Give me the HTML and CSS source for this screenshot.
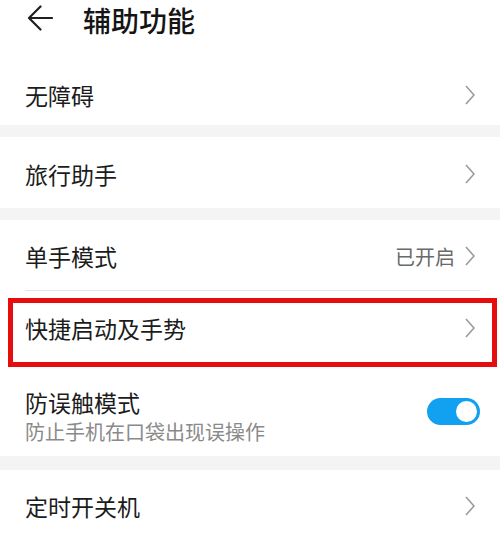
FILE: index.html
```html
<!DOCTYPE html>
<html lang="zh-CN">
<head>
    <meta charset="UTF-8">
    <meta name="viewport" content="width=device-width, initial-scale=1.0">
    <title>辅助功能</title>
    <link rel="stylesheet" href="styles.css">
</head>
<body>
    <header class="top-bar">
        <svg class="back-icon" width="26" height="26" viewBox="0 0 26 26">
            <path d="M25 13 H2 M13.5 1.5 L2 13 L13.5 24.5" fill="none" stroke="#1f1f1f" stroke-width="2.2" stroke-linecap="round" stroke-linejoin="round"/>
        </svg>
        <h1>辅助功能</h1>
    </header>

    <div class="group">
        <div class="row row-first">
            <span class="label">无障碍</span>
            <svg class="chevron" width="10" height="20" viewBox="0 0 10 20"><polyline points="1,1 9,10 1,19" fill="none" stroke="#9a9a9a" stroke-width="1.6"/></svg>
        </div>
    </div>

    <div class="group">
        <div class="row">
            <span class="label">旅行助手</span>
            <svg class="chevron" width="10" height="20" viewBox="0 0 10 20"><polyline points="1,1 9,10 1,19" fill="none" stroke="#9a9a9a" stroke-width="1.6"/></svg>
        </div>
    </div>

    <div class="group group-wide-gap">
        <div class="row with-divider">
            <span class="label">单手模式</span>
            <span class="value">已开启</span>
            <svg class="chevron" width="10" height="20" viewBox="0 0 10 20"><polyline points="1,1 9,10 1,19" fill="none" stroke="#9a9a9a" stroke-width="1.6"/></svg>
        </div>
        <div class="row row-marked">
            <span class="label">快捷启动及手势</span>
            <svg class="chevron" width="10" height="20" viewBox="0 0 10 20"><polyline points="1,1 9,10 1,19" fill="none" stroke="#9a9a9a" stroke-width="1.6"/></svg>
            <div class="mark-box"></div>
        </div>
        <div class="row row-tall">
            <div class="text-block">
                <span class="label">防误触模式</span>
                <span class="sub">防止手机在口袋出现误操作</span>
            </div>
            <div class="toggle on"><div class="knob"></div></div>
        </div>
    </div>

    <div class="group">
        <div class="row row-last">
            <span class="label">定时开关机</span>
            <svg class="chevron" width="10" height="20" viewBox="0 0 10 20"><polyline points="1,1 9,10 1,19" fill="none" stroke="#9a9a9a" stroke-width="1.6"/></svg>
        </div>
    </div>
</body>
</html>
```

FILE: styles.css
```css
body {
    margin: 0;
    padding: 0;
    background-color: #f4f4f4;
    font-family: "Noto Sans CJK SC", "Noto Sans", sans-serif;
    color: #1c1c1c;
    overflow: hidden;
}
.top-bar {
    display: flex;
    align-items: center;
    height: 40px;
    padding-left: 27px;
    padding-bottom: 24px;
    background: white;
}
.back-icon {
    flex: none;
    margin-top: -4px;
}
.top-bar h1 {
    margin: 0 0 0 30px;
    font-size: 28px;
    font-weight: 500;
    line-height: 40px;
    color: #151515;
}
.group {
    background: white;
    margin-bottom: 12px;
}
.group-wide-gap {
    margin-bottom: 14px;
}
.row {
    position: relative;
    display: flex;
    align-items: center;
    height: 71px;
    padding: 2px 25px 0 25px;
    box-sizing: border-box;
}
.row-first {
    height: 61px;
    padding-top: 0;
}
.row-marked {
    height: 74px;
}
.row-tall {
    height: 92px;
    padding-top: 14px;
}
.row-last {
    height: 72px;
    padding-top: 0;
}
.with-divider {
    height: 70px;
}
.with-divider::after {
    content: "";
    position: absolute;
    left: 25px;
    right: 20px;
    bottom: -1px;
    height: 1px;
    background: #e4e4e4;
}
.label {
    flex: 1;
    font-size: 23px;
    line-height: 30px;
}
.value {
    font-size: 20px;
    color: #6a6a6a;
    margin-right: 10px;
}
.chevron {
    flex: none;
}
.text-block {
    flex: 1;
    display: flex;
    flex-direction: column;
}
.sub {
    font-size: 20px;
    line-height: 30px;
    color: #8a8a8a;
}
.toggle {
    position: relative;
    width: 53px;
    height: 27px;
    border-radius: 14px;
    background: #ccc;
    margin-right: -5px;
    margin-top: -12px;
}
.toggle.on {
    background: #12a0f0;
}
.knob {
    position: absolute;
    top: 1px;
    right: 1px;
    width: 21px;
    height: 21px;
    border-radius: 50%;
    background: white;
    border: 2px solid #12a0f0;
}
/* red annotation frame drawn over the row */
.mark-box {
    position: absolute;
    left: 8px;
    top: 8px;
    width: 489px;
    height: 69px;
    border: 5px solid #e50d0d;
    box-sizing: border-box;
}
```
